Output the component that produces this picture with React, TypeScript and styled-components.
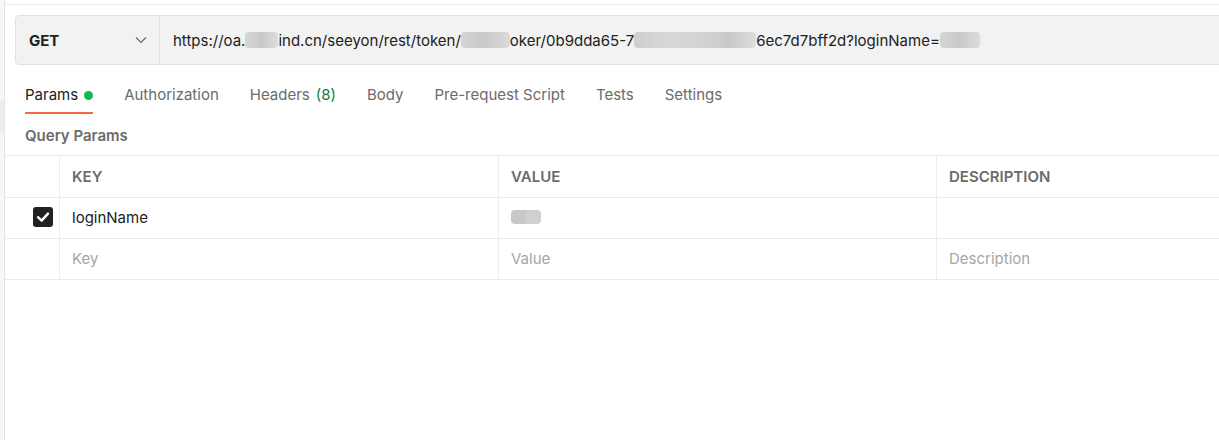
import React from "react";
import styled, { createGlobalStyle } from "styled-components";

const GlobalStyle = createGlobalStyle`
  html, body {
    margin: 0;
    padding: 0;
    background: #ffffff;
    font-family: Inter, "Noto Sans", "Liberation Sans", sans-serif;
    font-size: 15px;
    color: #212121;
  }
  * {
    box-sizing: border-box;
  }
`;

function App() {
  return (
    <Page>
      <GlobalStyle />
      <SideStrip>
        <SideItem />
      </SideStrip>
      <Main>
        <TopEdge />
        <Request>
          <UrlBar>
            <Method>
              <span>GET</span>
              <Chevron viewBox="0 0 12 8" width="12" height="8">
                <path d="M1 1.5 L6 6.5 L11 1.5" fill="none" stroke="#6b6b6b" strokeWidth="1.2" />
              </Chevron>
            </Method>
            <Url>
              https://oa.
              <Blurred w={33} />
              ind.cn/seeyon/rest/token/
              <Blurred w={49} />
              oker/0b9dda65-7
              <Blurred w={122} tone="linear-gradient(90deg,#c9c9c9,#d6d6d6 30%,#cfcfcf 55%,#c4c4c4 80%,#dcdcdc)" />
              6ec7d7bff2d?loginName=
              <Blurred w={40} />
            </Url>
          </UrlBar>
        </Request>

        <Tabs>
          <Tab active>
            Params <Dot />
          </Tab>
          <Tab>Authorization</Tab>
          <Tab>
            Headers <Count>(8)</Count>
          </Tab>
          <Tab>Body</Tab>
          <Tab>Pre-request Script</Tab>
          <Tab>Tests</Tab>
          <Tab>Settings</Tab>
        </Tabs>

        <SectionTitle>Query Params</SectionTitle>

        <Table>
          <Row head>
            <CheckCell />
            <Cell>KEY</Cell>
            <Cell>VALUE</Cell>
            <Cell>DESCRIPTION</Cell>
          </Row>
          <Row>
            <CheckCell>
              <Checkbox>
                <svg viewBox="0 0 20 20" width="20" height="20">
                  <path d="M5 10.2 L8.6 13.6 L15 6.6" fill="none" stroke="#fff" strokeWidth="2.4" strokeLinecap="round" strokeLinejoin="round" />
                </svg>
              </Checkbox>
            </CheckCell>
            <Cell>loginName</Cell>
            <Cell>
              <Blurred w={30} h={14} tone="linear-gradient(90deg,#c2c2c2 50%,#cbcbcb 50%)" />
            </Cell>
            <Cell />
          </Row>
          <Row>
            <CheckCell />
            <Cell muted>Key</Cell>
            <Cell muted>Value</Cell>
            <Cell muted>Description</Cell>
          </Row>
        </Table>
      </Main>
    </Page>
  );
}
export default App;

const Page = styled.div`
  display: flex;
  width: 100%;
  height: 440px;
  overflow: hidden;
`;

const SideStrip = styled.div`
  width: 5px;
  flex-shrink: 0;
  background: #f7f7f7;
  border-right: 1px solid #e3e3e3;
  padding-top: 100px;
`;

const SideItem = styled.div`
  height: 33px;
  background: #ececec;
`;

const Main = styled.div`
  flex: 1;
  min-width: 0;
  display: flex;
  flex-direction: column;
`;

const TopEdge = styled.div`
  height: 5px;
  border-bottom: 1px solid #ebebeb;
`;

const Request = styled.div`
  padding: 10px 0 0 10px;
`;

const UrlBar = styled.div`
  display: flex;
  height: 50px;
  width: 1230px;
  background: #f2f2f2;
  border: 1px solid #e2e2e2;
  border-radius: 4px;
`;

const Method = styled.div`
  width: 144px;
  flex-shrink: 0;
  display: flex;
  align-items: center;
  justify-content: space-between;
  padding: 0 12px 0 13px;
  border-right: 1px solid #e2e2e2;
  font-weight: 700;
  font-size: 15px;
  color: #212121;
`;

const Chevron = styled.svg`
  display: block;
`;

const Url = styled.div`
  display: flex;
  align-items: center;
  padding-left: 13px;
  font-size: 15px;
  color: #212121;
  white-space: pre;
`;

const Blurred = styled.span<{ w: number; h?: number; tone?: string }>`
  display: inline-block;
  width: ${(p) => p.w}px;
  height: ${(p) => p.h ?? 16}px;
  border-radius: 4px;
  background: ${(p) => p.tone ?? "linear-gradient(90deg,#d2d2d2,#c4c4c4 50%,#d9d9d9)"};
  opacity: 0.9;
`;

const Tabs = styled.div`
  display: flex;
  gap: 31px;
  padding: 12px 0 0 20px;
`;

const Tab = styled.div<{ active?: boolean }>`
  display: flex;
  align-items: center;
  gap: 6px;
  padding: 8px 0 7px;
  line-height: 20px;
  font-size: 15px;
  color: ${(p) => (p.active ? "#212121" : "#6b6b6b")};
  border-bottom: 2px solid ${(p) => (p.active ? "#f26b3a" : "transparent")};
`;

const Dot = styled.span`
  width: 9px;
  height: 9px;
  border-radius: 50%;
  background: #0cbb52;
`;

const Count = styled.span`
  color: #0f7a43;
`;

const SectionTitle = styled.div`
  padding: 12px 0 0 20px;
  line-height: 20px;
  font-size: 15px;
  font-weight: 600;
  color: #6b6b6b;
`;

const Table = styled.div`
  margin-top: 9px;
  border-top: 1px solid #ebebeb;
`;

const Row = styled.div<{ head?: boolean }>`
  display: grid;
  grid-template-columns: 55px 439px 438px 1fr;
  height: ${(p) => (p.head ? 42 : 41)}px;
  border-bottom: 1px solid #ebebeb;
  font-weight: ${(p) => (p.head ? 600 : 400)};
  color: ${(p) => (p.head ? "#6b6b6b" : "#212121")};
  & > div {
    padding-bottom: ${(p) => (p.head ? 0 : 2)}px;
  }
`;

const CheckCell = styled.div`
  display: flex;
  align-items: center;
  justify-content: flex-end;
  padding-right: 6px;
  border-right: 1px solid #ebebeb;
`;

const Cell = styled.div<{ muted?: boolean }>`
  display: flex;
  align-items: center;
  padding-left: 12px;
  font-size: 15px;
  color: ${(p) => (p.muted ? "#a6a6a6" : "inherit")};
  border-right: 1px solid #ebebeb;
  &:last-child {
    border-right: none;
  }
`;

const Checkbox = styled.div`
  width: 20px;
  height: 20px;
  border-radius: 3px;
  background: #212121;
  display: flex;
`;
